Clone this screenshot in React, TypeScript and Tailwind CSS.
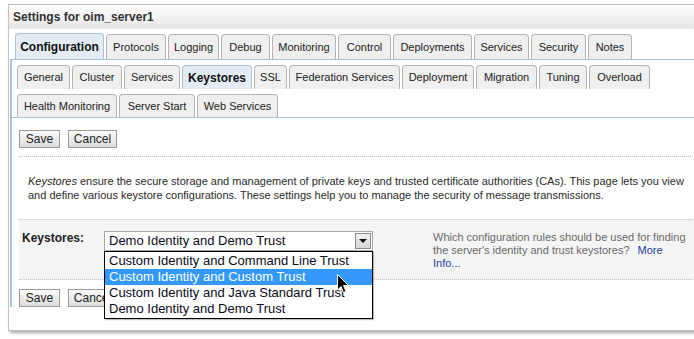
import React from "react";

type Tab = { label: string; w: string; active?: boolean };

const topTabs: Tab[] = [
  { label: "Configuration", w: "w-[89px]", active: true },
  { label: "Protocols", w: "w-[60px]" },
  { label: "Logging", w: "w-[51px]" },
  { label: "Debug", w: "w-[49px]" },
  { label: "Monitoring", w: "w-[64px]" },
  { label: "Control", w: "w-[53px]" },
  { label: "Deployments", w: "w-[79px]" },
  { label: "Services", w: "w-[55px]" },
  { label: "Security", w: "w-[55px]" },
  { label: "Notes", w: "w-[44px]" },
];

const row2: Tab[] = [
  { label: "General", w: "w-[53px]" },
  { label: "Cluster", w: "w-[50px]" },
  { label: "Services", w: "w-[56px]" },
  { label: "Keystores", w: "w-[70px]", active: true },
  { label: "SSL", w: "w-[33px]" },
  { label: "Federation Services", w: "w-[111px]" },
  { label: "Deployment", w: "w-[72px]" },
  { label: "Migration", w: "w-[61px]" },
  { label: "Tuning", w: "w-[48px]" },
  { label: "Overload", w: "w-[61px]" },
];

const row3: Tab[] = [
  { label: "Health Monitoring", w: "w-[100px]" },
  { label: "Server Start", w: "w-[76px]" },
  { label: "Web Services", w: "w-[81px]" },
];

function TabItem({ t, h }: { t: Tab; h: string }) {
  return (
    <div
      className={
        "flex items-center justify-center rounded-t-[4px] border border-b-0 text-[11px] whitespace-nowrap " +
        t.w +
        " " +
        h +
        " " +
        (t.active
          ? "border-[#a9c2da] bg-[#e3ecf4] font-bold text-[12px] text-[#111]"
          : "border-[#b4b4b4] bg-[#efefef] text-[#222]")
      }
    >
      {t.label}
    </div>
  );
}

function Btn({ label, w }: { label: string; w: string }) {
  return (
    <div
      className={
        "flex h-[18px] items-center justify-center border border-[#9a9a9a] bg-gradient-to-b from-[#fbfbfb] to-[#dcdcdc] text-[12px] text-[#222] " +
        w
      }
    >
      {label}
    </div>
  );
}

export default function App() {
  const options = [
    "Custom Identity and Command Line Trust",
    "Custom Identity and Custom Trust",
    "Custom Identity and Java Standard Trust",
    "Demo Identity and Demo Trust",
  ];
  return (
    <div
      className="relative h-[339px] w-[694px] overflow-hidden bg-white"
      style={{ fontFamily: '"Liberation Sans", Arial, sans-serif' }}
    >
      <div className="ml-[8px] mt-[4px] h-[327px] w-[720px] border border-[#c2c2c2] bg-white shadow-[2px_2px_3px_rgba(0,0,0,0.35)]">
        {/* Header */}
        <div className="flex h-[24px] items-center bg-gradient-to-b from-[#fdfdfd] to-[#e6e6e6] pl-[4px] text-[12px] font-bold text-[#333]">
          Settings for oim_server1
        </div>

        {/* Top tabs */}
        <div className="mt-[4px] flex items-end gap-[2px] pl-[6px]">
          {topTabs.map((t) => (
            <TabItem key={t.label} t={t} h={t.active ? "h-[26px]" : "h-[25px]"} />
          ))}
        </div>

        {/* Panel */}
        <div className="ml-[1px] border-l-2 border-t border-[#a9c2da]">
          <div className="border-b border-[#a9c2da] pl-[5px] pt-[5px]">
            <div className="flex items-end gap-[2px]">
              {row2.map((t) => (
                <TabItem key={t.label} t={t} h="h-[24px]" />
              ))}
            </div>
            <div className="mt-[5px] flex items-end gap-[2px]">
              {row3.map((t) => (
                <TabItem key={t.label} t={t} h="h-[23px]" />
              ))}
            </div>
          </div>

          <div className="pl-[7px] pt-[12px]">
            <div className="flex gap-[8px]">
              <Btn label="Save" w="w-[41px]" />
              <Btn label="Cancel" w="w-[49px]" />
            </div>
            <div className="mt-[8px] border-t border-dotted border-[#bdbdbd]" />
            <div className="mt-[17px] pl-[9px] text-[11px] leading-[14px] text-[#2a2a2a]">
              <div>
                <i>Keystores</i> ensure the secure storage and management of private keys and trusted certificate authorities (CAs). This page lets you view
              </div>
              <div>and define various keystore configurations. These settings help you to manage the security of message transmissions.</div>
            </div>

            {/* Gray section */}
            <div className="mt-[17px] flex h-[61px] border-y border-dotted border-[#c4c4c4] bg-[#f4f4f4] pl-[3px] pt-[11px]">
              <div className="w-[82px] text-[12px] font-bold leading-[14px] text-[#222]">Keystores:</div>
              <div className="relative h-[20px] w-[269px]">
                <div className="flex h-[20px] w-[269px] items-center justify-between border border-[#a5a5a5] bg-white pl-[4px] pr-[1px] text-[13px] text-[#0a0a1a]">
                  <span>Demo Identity and Demo Trust</span>
                  <div className="flex h-[16px] w-[16px] items-center justify-center border border-[#8a8a8a] bg-gradient-to-b from-[#f2f2f2] to-[#d4d4d4]">
                    <svg width="8" height="5" viewBox="0 0 8 5">
                      <path d="M0 0 L8 0 L4 4 Z" fill="#111" />
                    </svg>
                  </div>
                </div>
                <div className="absolute left-0 top-[20px] z-10 w-[269px] border border-black bg-white py-[1px] shadow-[1px_1px_1px_rgba(0,0,0,0.25)]">
                  {options.map((o, i) => (
                    <div
                      key={o}
                      className={
                        "flex h-[16px] items-center pl-[4px] text-[13px] " +
                        (i === 1 ? "bg-[#3399ff] text-white" : "text-[#0a0a1a]")
                      }
                    >
                      {o}
                    </div>
                  ))}
                </div>
              </div>
              <div className="ml-[60px] flex w-[255px] flex-col text-[11px] leading-[13px] text-[#6a6a6a]">
                <div className="h-[13px] whitespace-nowrap">Which configuration rules should be used for finding</div>
                <div className="flex h-[13px] gap-[8px] whitespace-nowrap">
                  <span>the server's identity and trust keystores?</span>
                  <span className="text-[#1f3f9f]">More</span>
                </div>
                <div className="h-[13px] text-[#1f3f9f]">Info...</div>
              </div>
            </div>

            <div className="mt-[9px] flex gap-[8px]">
              <Btn label="Save" w="w-[41px]" />
              <Btn label="Cancel" w="w-[49px]" />
            </div>
          </div>
        </div>
      </div>

      {/* Mouse cursor */}
      <svg className="absolute left-[337px] top-[274px] z-20" width="13" height="20" viewBox="0 0 13 20">
        <path d="M0.5 0.5 L0.5 16 L4 12.5 L6.5 18.5 L9 17.5 L6.5 11.5 L11.5 11.5 Z" fill="#000" stroke="#fff" strokeWidth="1" />
      </svg>
    </div>
  );
}
